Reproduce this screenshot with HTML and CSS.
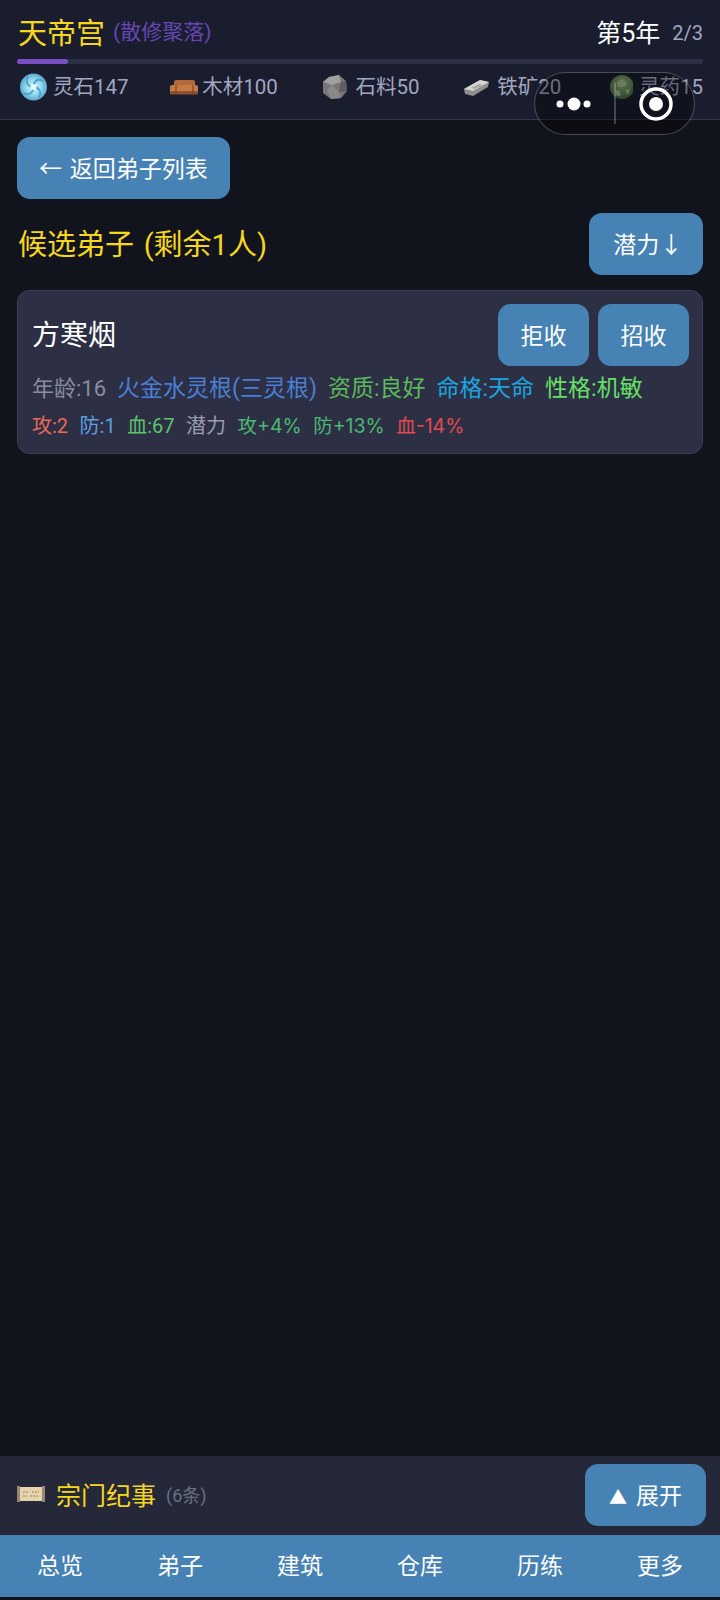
FILE: index.html
```html
<!DOCTYPE html>
<html lang="zh">
  <head>
    <meta charset="utf-8">
    <meta name="viewport" content="width=device-width, user-scalable=no" />
    <title>天帝宫</title>
    <link rel="stylesheet" href="styles.css">
  </head>
  <body>
    <div class="app">
      <header class="top">
        <div class="top-row">
          <div class="sect">
            <span class="sect-name">天帝宫</span>
            <span class="sect-rank">(散修聚落)</span>
          </div>
          <div class="year">
            <span class="year-num">第5年</span>
            <span class="year-step">2/3</span>
          </div>
        </div>
        <div class="progress"><div class="progress-fill" style="width: 7.5%"></div></div>
        <div class="res-row">
          <div class="res">
            <svg class="res-icon" viewBox="0 0 30 30">
              <defs>
                <radialGradient id="orbBlue" cx="50%" cy="50%" r="50%">
                  <stop offset="0" stop-color="#d8f6fb"/>
                  <stop offset="0.6" stop-color="#8ed6ec"/>
                  <stop offset="1" stop-color="#5aa9cc"/>
                </radialGradient>
              </defs>
              <circle cx="16.5" cy="15" r="13.5" fill="url(#orbBlue)"/>
              <path d="M16.5 15C16.5 9 21 6 26 9M16.5 15C22 15 25 20 22 25M16.5 15C16.5 21 11 24 7 21M16.5 15C11 15 8 10 11 5" fill="none" stroke="#4aa3cb" stroke-width="1.8" stroke-linecap="round"/>
              <circle cx="16.5" cy="15" r="3" fill="#e4fafd"/>
            </svg>
            <span>灵石147</span>
          </div>
          <div class="res res-wood">
            <svg class="res-icon" viewBox="0 0 30 30">
              <rect x="4" y="8" width="21" height="7" rx="2" fill="#b5683a"/>
              <rect x="0" y="13" width="28" height="9" rx="2" fill="#c67a45"/>
              <rect x="0" y="19" width="28" height="3.5" rx="1.5" fill="#8f5230"/>
              <path d="M6 13V22M23 13V22" stroke="#7e4526" stroke-width="1.2"/>
            </svg>
            <span>木材100</span>
          </div>
          <div class="res">
            <svg class="res-icon" viewBox="0 0 30 30">
              <path d="M9 5L19 3L26 9L27 19L21 26L11 27L3 21L3 10Z" fill="#77767a"/>
              <path d="M9 5L19 3L21 10L12 13L3 10Z" fill="#a09f9c"/>
              <path d="M21 10L26 9L27 19L19 20Z" fill="#5e5d60"/>
              <path d="M12 13L19 20L21 26L11 27L7 18Z" fill="#8b8a88"/>
            </svg>
            <span>石料50</span>
          </div>
          <div class="res">
            <svg class="res-icon" viewBox="0 0 30 30">
              <path d="M3 17L19 8L28 10L27 15L12 24L4 22Z" fill="#8e8e8c"/>
              <path d="M3 17L19 8L28 10L12 19Z" fill="#d6d6d0"/>
              <path d="M10 16L18 12L22 13L14 17Z" fill="#a9a9a6"/>
            </svg>
            <span>铁矿20</span>
          </div>
          <div class="res">
            <svg class="res-icon" viewBox="0 0 30 30">
              <defs>
                <radialGradient id="orbGreen" cx="50%" cy="35%" r="60%">
                  <stop offset="0" stop-color="#8fb47c"/>
                  <stop offset="1" stop-color="#4d7047"/>
                </radialGradient>
              </defs>
              <circle cx="19" cy="15" r="12" fill="url(#orbGreen)"/>
              <path d="M14 10L19 7L24 11L21 15L15 15ZM12 19L16 18L18 23L14 24ZM22 18L27 17L25 23Z" fill="#a0bd90"/>
            </svg>
            <span>灵药15</span>
          </div>
        </div>
      </header>

      <main class="content">
        <button class="btn back-btn">← 返回弟子列表</button>
        <div class="list-head">
          <h2 class="list-title">候选弟子 (剩余1人)</h2>
          <button class="btn sort-btn">潜力 ↓</button>
        </div>
        <div class="card">
          <div class="card-head">
            <span class="name">方寒烟</span>
            <div class="actions">
              <button class="btn card-btn">拒收</button>
              <button class="btn card-btn">招收</button>
            </div>
          </div>
          <div class="meta">
            <span class="c-gray">年龄:16</span>
            <span class="c-root">火金水灵根(三灵根)</span>
            <span class="c-quality">资质:良好</span>
            <span class="c-fate">命格:天命</span>
            <span class="c-nature">性格:机敏</span>
          </div>
          <div class="stats">
            <span class="c-atk">攻:2</span>
            <span class="c-def">防:1</span>
            <span class="c-hp">血:67</span>
            <span class="c-pot">潜力</span>
            <span class="c-up">攻+4%</span>
            <span class="c-up">防+13%</span>
            <span class="c-down">血-14%</span>
          </div>
        </div>
      </main>

      <section class="chronicle">
        <div class="chronicle-left">
          <svg class="scroll-icon" viewBox="0 0 28 20">
            <rect x="3" y="3" width="22" height="14" fill="#e6d3ad"/>
            <rect x="0" y="2" width="3" height="16" fill="#9a8674"/>
            <rect x="25" y="2" width="3" height="16" fill="#9a8674"/>
            <path d="M6 8H12M15 8H22M6 12H10M13 12H22" stroke="#b39b7a" stroke-width="1.5" stroke-dasharray="2 1"/>
          </svg>
          <span class="chronicle-title">宗门纪事</span>
          <span class="chronicle-count">(6条)</span>
        </div>
        <button class="btn expand-btn"><span class="tri">▲</span>展开</button>
      </section>

      <nav class="tabs">
        <div class="tab">总览</div>
        <div class="tab">弟子</div>
        <div class="tab">建筑</div>
        <div class="tab">仓库</div>
        <div class="tab">历练</div>
        <div class="tab">更多</div>
      </nav>
    </div>

    <!-- mini program capsule, sits over the header -->
    <div class="capsule">
      <svg class="capsule-svg" viewBox="0 0 161 63">
        <circle cx="26" cy="32" r="3.5" fill="#fff"/>
        <circle cx="40" cy="32" r="6.5" fill="#fff"/>
        <circle cx="53" cy="32" r="3.5" fill="#fff"/>
        <path d="M81 11V52" stroke="#fff" stroke-opacity="0.3" stroke-width="1.5"/>
        <circle cx="122" cy="32" r="15" fill="none" stroke="#fff" stroke-width="3.5"/>
        <circle cx="122" cy="32" r="7" fill="#fff"/>
      </svg>
    </div>
  </body>
</html>
```

FILE: styles.css
```css
* {
  box-sizing: border-box;
}
html, body {
  margin: 0;
  height: 100%;
}
body {
  background: #11141d;
  font-family: Roboto, "Noto Sans CJK SC", sans-serif;
  color: #fff;
  overflow: hidden;
}
.app {
  display: flex;
  flex-direction: column;
  height: 1600px;
  padding-bottom: 3px;
  background: #11141d;
}

/* header */
.top {
  height: 120px;
  padding: 10px 17px 0;
  background: #1a1d2e;
  border-bottom: 1px solid #33364a;
}
.top-row {
  display: flex;
  justify-content: space-between;
  align-items: center;
  height: 42px;
  padding-left: 1px;
}
.sect {
  display: flex;
  align-items: center;
  gap: 8px;
}
.sect-name {
  font-size: 29px;
  color: #f7d71e;
}
.sect-rank {
  margin-bottom: 2px;
  font-size: 21px;
  color: #6347b0;
}
.year {
  display: flex;
  align-items: center;
  gap: 12px;
}
.year-num {
  font-size: 25px;
}
.year-step {
  margin-top: 4px;
  font-size: 20px;
  color: #a3a6c0;
}
.progress {
  height: 5px;
  margin-top: 7px;
  background: #2d3045;
  border-radius: 3px;
}
.progress-fill {
  height: 100%;
  background: #7a4fc4;
  border-radius: 3px;
}
.res-row {
  display: flex;
  justify-content: space-between;
  margin-top: 8px;
}
.res {
  display: flex;
  align-items: center;
  gap: 6px;
  font-size: 20.5px;
  line-height: 30px;
  color: #a3a6c0;
}
.res-wood {
  gap: 2px;
}
.res-icon {
  width: 30px;
  height: 30px;
}

/* buttons */
.btn {
  height: 62px;
  padding: 0 22px 2px;
  border: 0;
  border-radius: 13px;
  background: #4682b4;
  color: #fff;
  font-family: inherit;
  font-size: 23px;
}

/* candidate list */
.content {
  flex: 1;
  padding: 17px 17px 0;
}
.back-btn {
  display: block;
  word-spacing: 2px;
}
.list-head {
  display: flex;
  justify-content: space-between;
  align-items: center;
  margin-top: 14px;
}
.list-title {
  margin: 0 0 0 1px;
  padding-bottom: 4px;
  font-size: 29px;
  font-weight: 400;
  word-spacing: 2.5px;
  color: #f7d71e;
}
.sort-btn {
  width: 114px;
  padding: 0 0 2px 4px;
  word-spacing: -5px;
}
.card {
  margin-top: 15px;
  padding: 13px 13px 0 14px;
  height: 164px;
  background: #2d3044;
  border: 1px solid #3a3d50;
  border-radius: 12px;
}
.card-head {
  display: flex;
  justify-content: space-between;
  align-items: center;
}
.name {
  padding-bottom: 4px;
  font-size: 28px;
}
.actions {
  display: flex;
  gap: 9px;
}
.card-btn {
  width: 91px;
  padding: 0 0 2px;
}
.meta {
  display: flex;
  gap: 11px;
  margin-top: 7px;
  font-size: 23px;
  line-height: 32px;
}
.meta .c-gray {
  font-size: 22px;
}
.stats {
  display: flex;
  gap: 11.5px;
  margin-top: 6px;
  font-size: 20px;
  line-height: 30px;
}
.c-gray { color: #8a8d9e; }
.c-root { color: #4a7fd6; }
.c-quality { color: #5cb85c; }
.c-fate { color: #1ca6e0; }
.c-nature { color: #66e066; }
.c-atk { color: #e86a5a; }
.c-def { color: #5a9fe0; }
.c-hp { color: #5cc46a; }
.c-pot { color: #9a9dac; }
.c-up, .c-down {
  font-family: Inter, "Noto Sans CJK SC", sans-serif;
  font-size: 19.5px;
}
.c-up { color: #4ab870; }
.c-down { color: #e04a50; }

/* chronicle bar */
.chronicle {
  display: flex;
  justify-content: space-between;
  align-items: center;
  height: 79px;
  padding: 0 14px 1px 17px;
  background: #252838;
}
.chronicle-left {
  display: flex;
  align-items: center;
  padding-bottom: 3px;
}
.scroll-icon {
  width: 28px;
  height: 20px;
  margin-right: 11px;
}
.chronicle-title {
  font-size: 25px;
  color: #f7d71e;
}
.chronicle-count {
  margin-left: 10px;
  font-size: 18px;
  color: #6b6e82;
}
.expand-btn {
  width: 121px;
  padding: 0 0 2px;
}
.tri {
  margin-right: 9px;
  font-size: 18px;
}

/* bottom tabs */
.tabs {
  display: grid;
  grid-template-columns: repeat(6, 1fr);
  height: 62px;
  background: #4682b4;
}
.tab {
  display: flex;
  justify-content: center;
  align-items: center;
  padding-bottom: 5px;
  font-size: 23px;
}

/* overlay */
.capsule {
  position: absolute;
  left: 534px;
  top: 72px;
  width: 161px;
  height: 63px;
  background: rgba(0, 0, 0, 0.35);
  border: 1.5px solid rgba(255, 255, 255, 0.25);
  border-radius: 32px;
}
.capsule-svg {
  position: absolute;
  left: -1.5px;
  top: -1.5px;
  width: 161px;
  height: 63px;
}
```
